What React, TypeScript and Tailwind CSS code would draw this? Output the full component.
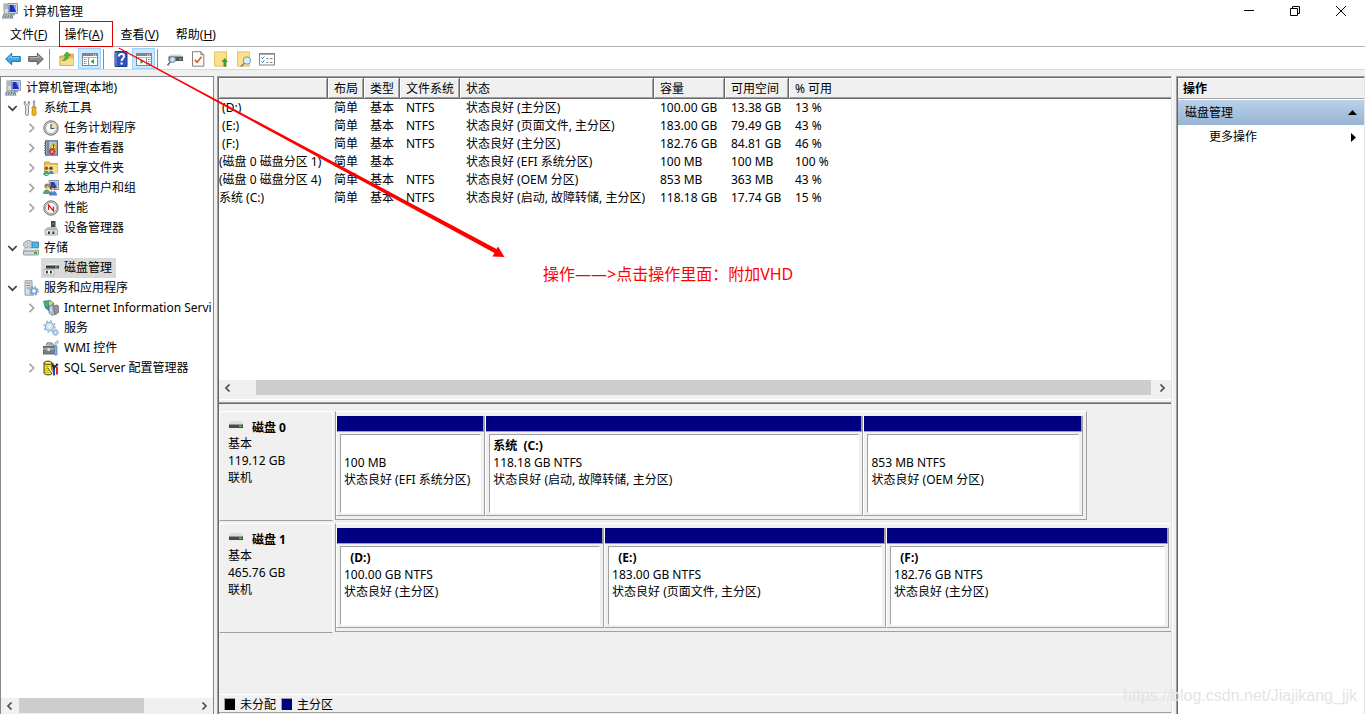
import type { ReactNode } from 'react';

/* ---------- Icons ---------- */

function Svg({ children, className = 'h-4 w-4' }: { children: ReactNode; className?: string }) {
  return (
    <svg viewBox="0 0 16 16" className={`block shrink-0 ${className}`} fill="none" aria-hidden="true">
      {children}
    </svg>
  );
}

const ComputerIcon = () => (
  <Svg>
    <rect x="2" y="1" width="5" height="10" fill="#d5d9dd" stroke="#9199a1" />
    <path d="M3 3h3M3 5h3" stroke="#8b959e" />
    <path d="M6 .5h9.500v10H7z" fill="#cfd6de" stroke="#8e99a6" />
    <path d="M7.500 2H14v7H7.500z" fill="#1d2fc0" />
    <path d="M11 2h3v7z" fill="#8da2ee" />
    <path d="M9 11h4v1.500H9z" fill="#9aa3ad" />
    <path d="M1 11.500h9l1.500 4H0z" fill="#6f7f8a" />
    <path d="M2 12.800h7M1.500 14.300h8.500" stroke="#dbe3e8" strokeDasharray="1.500 1" />
  </Svg>
);

const ToolsIcon = () => (
  <Svg>
    <path
      d="M2.200 1v2.500l1.600 1 1.700-1V1C7 2 7.300 4.500 5.500 6v8.500c0 1.300-3 1.300-3 0V6C.7 4.500.9 2 2.200 1z"
      fill="#dfe3e6"
      stroke="#7f868c"
      strokeWidth=".9"
    />
    <path d="M10.300.8h1.400v6h-1.400z" fill="#c2c7cb" stroke="#7f868c" strokeWidth=".7" />
    <path d="M9 7h4v2l-.7 1 .7 1v3.500c0 1.200-4 1.200-4 0V11l.7-1-.7-1z" fill="#f4b41e" stroke="#b97b0c" strokeWidth=".8" />
  </Svg>
);

const ClockIcon = () => (
  <Svg>
    <circle cx="8" cy="8" r="7.200" fill="#c9ccce" stroke="#6e7274" />
    <circle cx="8" cy="8" r="5.500" fill="#fbf9ee" stroke="#9a9d9f" strokeWidth=".8" />
    <path d="M8 2.500A5.500 5.500 0 0113.500 8H8z" fill="#f2dca4" />
    <path d="M8 4v4.500h3.500" stroke="#3c5a80" strokeWidth="1.200" />
  </Svg>
);

const EventIcon = () => (
  <Svg>
    <rect x="2.500" y=".8" width="12" height="14.400" fill="#9fb3c8" stroke="#4f6479" />
    <path d="M5 1v14" stroke="#4f6479" />
    <path d="M1 3h2.500M1 5.500h2.500M1 8h2.500M1 10.500h2.500M1 13h2.500" stroke="#6a7178" />
    <path d="M6.500 3h6M6.500 5h6M6.500 7h3" stroke="#dfe9f3" />
    <path d="M10.500 2.500l3.500 6H7z" fill="#ffd42e" stroke="#b88a00" strokeWidth=".6" />
    <path d="M10.500 4.500v2.200M10.500 7.200v.8" stroke="#222" strokeWidth=".9" />
    <circle cx="9.200" cy="11.600" r="2.800" fill="#d8383a" stroke="#9c1d20" strokeWidth=".6" />
    <path d="M8 10.400l2.400 2.400M10.400 10.400L8 12.800" stroke="#fff" strokeWidth=".8" />
  </Svg>
);

const SharedFolderIcon = () => (
  <Svg>
    <path d="M1.500 2h5l1 1.500h7V13h-13z" fill="#e9bf55" stroke="#c59a33" strokeWidth=".8" />
    <path d="M2.500 5h12v8h-12z" fill="#f8dc87" />
    <circle cx="3.500" cy="8.300" r="1.700" fill="#7d5a35" />
    <circle cx="8" cy="8.300" r="1.700" fill="#4f4a40" />
    <path d="M1 14c0-4.500 5-4.500 5 0z" fill="#3da878" />
    <path d="M5.700 14c0-4.500 5-4.500 5 0z" fill="#4b8ad0" />
    <path d="M0 13.500l3 2 3-1" stroke="#2fa35f" strokeWidth="1.300" />
  </Svg>
);

const UsersIcon = () => (
  <Svg>
    <path d="M6 .5h9.500v9H7z" fill="#ccd4dd" stroke="#8792a0" />
    <path d="M7.500 2H14v6H7.500z" fill="#2439c7" />
    <path d="M11 2h3v6z" fill="#94a8f0" />
    <circle cx="4" cy="6" r="2.600" fill="#a97d46" />
    <circle cx="9.500" cy="7.300" r="2.500" fill="#5b4530" />
    <path d="M3.500 6.500h2.300v2H3.500zM8.700 8h2.200v1.800H8.700z" fill="#f3cda3" />
    <path d="M0 14c0-6 7.500-6 7.500 0z" fill="#5f9b73" />
    <path d="M6 15.500c0-6.500 8-6.500 8 0z" fill="#4a83cb" />
    <path d="M9 10.500l1 2.500 1-2.500z" fill="#fff" />
  </Svg>
);

const PerformanceIcon = () => (
  <Svg>
    <circle cx="8" cy="8" r="7.200" fill="#d0d3d3" stroke="#6b6f70" />
    <circle cx="8" cy="8" r="5.500" fill="#fff" stroke="#8f9394" strokeWidth=".8" />
    <path d="M5.500 10V5l5 6V6.500" stroke="#cf2222" strokeWidth="1.300" />
  </Svg>
);

const DeviceIcon = () => (
  <Svg>
    <path d="M8 1h4.500v7H8z" fill="#45494c" />
    <path d="M9.500 3h1.500v1.500H9.500z" fill="#36c436" />
    <path d="M4.500 7h9l1 2.500h-12z" fill="#b8bdc1" />
    <path d="M2 9.500h12.500V15H2z" fill="#d9dcde" stroke="#9ca1a5" strokeWidth=".8" />
    <path d="M5 11.500h1.800V14H5zM9.500 11.500h1.800V14H9.500z" fill="#292c2e" />
  </Svg>
);

const StorageIcon = () => (
  <Svg>
    <ellipse cx="5.500" cy="4.500" rx="5" ry="4" fill="#ccd2d6" stroke="#858d93" strokeWidth=".8" />
    <circle cx="5.500" cy="4.500" r="1.300" fill="#fff" stroke="#858d93" strokeWidth=".6" />
    <path d="M9 2h6.500v5.500H9z" fill="#4db2e4" stroke="#3277a2" strokeWidth=".8" />
    <path d="M1.500 8h13l1 3h-15z" fill="#e5e8ea" stroke="#969da2" strokeWidth=".6" />
    <rect x=".5" y="11" width="15" height="4" rx=".5" fill="#d3d7da" stroke="#83898e" strokeWidth=".8" />
    <path d="M11 12h3v2h-3z" fill="#2cc02c" />
  </Svg>
);

const DiskMgmtIcon = () => (
  <Svg>
    <path d="M4 3.500h11l1 2H2.500z" fill="#eceeef" />
    <path d="M3 5.500h13v3H3z" fill="#3b3f42" />
    <path d="M12 6.300h2.500v1.400H12z" fill="#3bd13b" />
    <path d="M1 9.500h10V15H1z" fill="#f2f3f4" stroke="#a6abae" strokeWidth=".8" />
    <path d="M3 10.800h1.800v2.700H3zM7 10.800h1.800v2.700H7z" fill="#2c2f31" />
  </Svg>
);

const ServicesAppsIcon = () => (
  <Svg>
    <path d="M2 .7h7v14.500H2z" fill="#dbe0e4" stroke="#8b949b" strokeWidth=".9" />
    <path d="M3.500 3h4M3.500 5.500h4M3.500 8h4" stroke="#7c8790" />
    <circle cx="11" cy="11" r="3" fill="#bcd4ea" stroke="#6f97bb" strokeWidth="1.200" />
    <circle cx="11" cy="11" r="4.200" stroke="#6f97bb" strokeWidth="1.300" strokeDasharray="1.600 1.700" />
    <circle cx="11" cy="11" r="1.200" fill="#fff" />
  </Svg>
);

const IisIcon = () => (
  <Svg>
    <path d="M0 1l7-1 4 3v6l-4 3-5-4z" fill="#2b7fd0" />
    <path d="M1 2l4-1 2 2-2 2-1 3-3-4z" fill="#52b348" />
    <path d="M6 .8l4 1.700-1 3-3 .5z" fill="#e8d23a" />
    <path d="M6 6l4-1.500 2 1.500v8l-3 1.500L6 13z" fill="#b3bac0" stroke="#6b747b" strokeWidth=".7" />
    <path d="M10 6l3.500-1L15.500 6v6.500L12 15z" fill="#8d959b" stroke="#5f676d" strokeWidth=".7" />
    <path d="M7 8l2 1M7 10l2 1" stroke="#fff" strokeWidth=".8" />
  </Svg>
);

const GearsIcon = () => (
  <Svg>
    <circle cx="6.500" cy="6.500" r="4" fill="#e9f3fb" stroke="#8fb5d6" strokeWidth="1.500" />
    <circle cx="6.500" cy="6.500" r="5.500" stroke="#8fb5d6" strokeWidth="1.500" strokeDasharray="2 2.300" />
    <circle cx="6.500" cy="6.500" r="1.800" fill="#fff" stroke="#a9c8e2" strokeWidth=".7" />
    <circle cx="12.500" cy="12.500" r="2" fill="#d6e6f3" stroke="#7ba5c9" />
    <circle cx="12.500" cy="12.500" r="3" stroke="#7ba5c9" strokeWidth="1" strokeDasharray="1.200 1.100" />
  </Svg>
);

const WmiIcon = () => (
  <Svg>
    <path d="M4 5V3h5v2" stroke="#53595e" />
    <path d="M1.500 5.500l2-1.500H13l-1.500 2z" fill="#a6adb3" />
    <path d="M0 6.500h12V14H0z" fill="#767e84" stroke="#4f565b" strokeWidth=".8" />
    <path d="M0 9h12" stroke="#c6cbcf" />
    <path d="M4.500 8h2.500v3H4.500z" fill="#dde0e2" />
    <path d="M14.500.5l-4 4 1.500 1.500 3.500-4z" fill="#d6dadd" stroke="#7b8388" strokeWidth=".6" />
    <path d="M11.500 6h2.500v8.500c0 1-2.500 1-2.500 0z" fill="#84b5e4" stroke="#4c7cae" strokeWidth=".7" />
  </Svg>
);

const SqlIcon = () => (
  <Svg>
    <path d="M1 3c0-2.500 8-2.500 8 0v10c0 2.500-8 2.500-8 0z" fill="#f6e52c" stroke="#222" strokeWidth=".9" />
    <path d="M1 3c0 2 8 2 8 0" stroke="#222" strokeWidth=".8" />
    <path d="M3 6v8M5 6v8" stroke="#9b8c00" strokeDasharray="1 1" />
    <path d="M8.500 5l2-2.500v2l1.500 1 2-2.500 1.500 2L12 8v2h-2V8z" fill="#2b2b2b" />
    <path d="M10 9.500h2v6h-2z" fill="#2448c9" />
    <path d="M13 7h2v7.500h-2z" fill="#d92626" />
    <path d="M5.500 7l4 6" stroke="#fff" strokeWidth="1.200" />
    <path d="M4.700 7.500l4 6" stroke="#222" strokeWidth=".6" />
  </Svg>
);

const DriveIcon = () => (
  <Svg>
    <path d="M2.500 3h11L15 6.500H1z" fill="#d9dcde" />
    <path d="M1 6.500h14V10H1z" fill="#474b4e" />
    <path d="M11 7.500h2.500V9H11z" fill="#3ee03e" />
  </Svg>
);

const ArrowIcon = ({ back = false }: { back?: boolean }) => (
  <Svg>
    <path
      d={back ? 'M.7 8l6-5.800v3.400h8.600v4.800H6.700v3.400z' : 'M15.300 8l-6-5.800v3.400H.7v4.800h8.600v3.400z'}
      fill={back ? '#3ca7e2' : '#858585'}
      stroke={back ? '#1971ad' : '#5b5b5b'}
      strokeLinejoin="round"
    />
    <path d={back ? 'M3 7.500l3-2.800v2h8' : 'M2 6.700h8v-2l3 2.800'} stroke={back ? '#9adafa' : '#bcbcbc'} strokeWidth=".9" />
  </Svg>
);

const FolderUpIcon = () => (
  <Svg>
    <path d="M.8 5h5l1-2h7.700v11.500H.8z" fill="#e3ba59" stroke="#c99d3d" strokeWidth=".7" />
    <path d="M1.500 7.500h13V14h-13z" fill="#f8dc8c" />
    <path d="M3 9.500C5 9 6.500 7 6.500 4.500H4.700L8 .8l3.500 3.700H9.500C9.500 8 7 10 3 9.500z" fill="#4cb93c" stroke="#2f8a26" strokeWidth=".5" />
  </Svg>
);

const PaneIcon = ({ right = false }: { right?: boolean }) => (
  <Svg>
    <rect x=".5" y="2.500" width="15" height="12" fill="#fff" stroke="#7f868c" />
    <path d="M1 4h14" stroke="#7f868c" strokeWidth="2" />
    <path d="M11 4h3" stroke="#fff" strokeDasharray="1 1" />
    <path d="M1 6.500h14" stroke="#aeb4b9" />
    <path d={right ? 'M10.500 7v7.500' : 'M6.500 7v7.500'} stroke="#8f969b" />
    <path d={right ? 'M12 8.500h2.500M12 10.500h2.500M12 12.500h2.500' : 'M2 8.500h3M2 10.500h3M2 12.500h3'} stroke="#4f80b8" strokeDasharray="1 .5" />
    <path d={right ? 'M4.500 8v5L8 10.500z' : 'M12 8v5l-3.500-2.500z'} fill="#3c9f35" />
  </Svg>
);

const HelpIcon = () => (
  <Svg>
    <path d="M2 .5h12v15H2z" fill="#2e55bf" stroke="#1c388b" />
    <path d="M3 1v14" stroke="#8aa4e6" />
    <path d="M5.800 5.500C5.800 2 11 2.200 11 5.300c0 2.200-2.400 2.200-2.400 4.700" stroke="#fff" strokeWidth="1.900" />
    <circle cx="8.600" cy="12.500" r="1.200" fill="#fff" />
  </Svg>
);

const ScanDriveIcon = () => (
  <Svg>
    <path d="M3.500 3.500h11l1.500 2H1.500z" fill="#d5d9dc" />
    <path d="M1.500 5.500H16v4.500H1.500z" fill="#4e5458" />
    <path d="M12 7.300h2.800v1.500H12z" fill="#32d432" />
    <circle cx="5.500" cy="8.500" r="3" fill="#bfe0f6" stroke="#71808b" />
    <path d="M3.300 10.800L.5 14.500" stroke="#66727b" strokeWidth="1.800" />
  </Svg>
);

const CheckDocIcon = () => (
  <Svg>
    <path d="M2.500.7h8.300l3 3v11.500H2.500z" fill="#fff" stroke="#818181" />
    <path d="M10.800.7v3h3" stroke="#818181" />
    <path d="M4.700 8.800l2.400 2.500 4.500-5.500" stroke="#e05a1f" strokeWidth="1.700" />
  </Svg>
);

const NoteUpIcon = () => (
  <Svg>
    <path d="M1.500.8h12v14.400h-12z" fill="#fbe08c" stroke="#dfb955" strokeWidth=".8" />
    <path d="M10.500 15.800V11h-2l3.200-4 3.300 4h-2v4.800z" fill="#23a63d" />
  </Svg>
);

const NoteSearchIcon = () => (
  <Svg>
    <path d="M1.500.8h12v14.400h-12z" fill="#fbe08c" stroke="#dfb955" strokeWidth=".8" />
    <circle cx="11" cy="9.500" r="3.700" fill="#d8edfa" stroke="#8296a5" />
    <path d="M8.300 12.300L5 15.500" stroke="#6f7f8b" strokeWidth="1.600" />
  </Svg>
);

const ChecklistIcon = () => (
  <Svg>
    <rect x=".5" y="2.500" width="15" height="11.500" fill="#fff" stroke="#7d8388" />
    <path d="M1 3.500h14" stroke="#a9aeb3" />
    <path d="M2.500 6.500l1 1 2-2M2.500 10.500l1 1 2-2" stroke="#2d7fc4" />
    <path d="M7.500 7.500h2M11 7.500h2.500M7.500 11.500h2M11 11.500h2.500" stroke="#7d8388" />
  </Svg>
);

const Chevron = ({ open }: { open: boolean }) => (
  <Svg>
    <path
      d={open ? 'M3.300 6L7.500 10.200 11.700 6' : 'M4.500 3.800L8.700 8 4.500 12.200'}
      stroke={open ? '#404040' : '#a6a6a6'}
      strokeWidth="1.700"
    />
  </Svg>
);

/* ---------- Data ---------- */

type TreeItem = { label: string; level: 0 | 1 | 2; icon: ReactNode; open?: boolean; selected?: boolean };

const tree: TreeItem[] = [
  { label: '计算机管理(本地)', level: 0, icon: <ComputerIcon /> },
  { label: '系统工具', level: 1, icon: <ToolsIcon />, open: true },
  { label: '任务计划程序', level: 2, icon: <ClockIcon />, open: false },
  { label: '事件查看器', level: 2, icon: <EventIcon />, open: false },
  { label: '共享文件夹', level: 2, icon: <SharedFolderIcon />, open: false },
  { label: '本地用户和组', level: 2, icon: <UsersIcon />, open: false },
  { label: '性能', level: 2, icon: <PerformanceIcon />, open: false },
  { label: '设备管理器', level: 2, icon: <DeviceIcon /> },
  { label: '存储', level: 1, icon: <StorageIcon />, open: true },
  { label: '磁盘管理', level: 2, icon: <DiskMgmtIcon />, selected: true },
  { label: '服务和应用程序', level: 1, icon: <ServicesAppsIcon />, open: true },
  { label: 'Internet Information Servi', level: 2, icon: <IisIcon />, open: false },
  { label: '服务', level: 2, icon: <GearsIcon /> },
  { label: 'WMI 控件', level: 2, icon: <WmiIcon /> },
  { label: 'SQL Server 配置管理器', level: 2, icon: <SqlIcon />, open: false },
];

const indents = ['pl-0.5', 'pl-1', 'pl-6'];

const menus = [
  { name: '文件', hotkey: 'F' },
  { name: '操作', hotkey: 'A' },
  { name: '查看', hotkey: 'V' },
  { name: '帮助', hotkey: 'H' },
];

const columns = [
  { title: '', width: 'w-[109px]' },
  { title: '布局', width: 'w-9' },
  { title: '类型', width: 'w-9' },
  { title: '文件系统', width: 'w-15' },
  { title: '状态', width: 'w-[194px]' },
  { title: '容量', width: 'w-[71px]' },
  { title: '可用空间', width: 'w-16' },
  { title: '% 可用', width: '' },
];

const volumes = [
  [' (D:)', '简单', '基本', 'NTFS', '状态良好 (主分区)', '100.00 GB', '13.38 GB', '13 %'],
  [' (E:)', '简单', '基本', 'NTFS', '状态良好 (页面文件, 主分区)', '183.00 GB', '79.49 GB', '43 %'],
  [' (F:)', '简单', '基本', 'NTFS', '状态良好 (主分区)', '182.76 GB', '84.81 GB', '46 %'],
  ['(磁盘 0 磁盘分区 1)', '简单', '基本', '', '状态良好 (EFI 系统分区)', '100 MB', '100 MB', '100 %'],
  ['(磁盘 0 磁盘分区 4)', '简单', '基本', 'NTFS', '状态良好 (OEM 分区)', '853 MB', '363 MB', '43 %'],
  ['系统 (C:)', '简单', '基本', 'NTFS', '状态良好 (启动, 故障转储, 主分区)', '118.18 GB', '17.74 GB', '15 %'],
];

const disks = [
  {
    name: '磁盘 0',
    size: '119.12 GB',
    frame: 'w-[90%] border-r pr-[3px]',
    partitions: [
      { name: '', size: '100 MB', status: '状态良好 (EFI 系统分区)', weight: 148 },
      { name: '系统  (C:)', size: '118.18 GB NTFS', status: '状态良好 (启动, 故障转储, 主分区)', weight: 378 },
      { name: '', size: '853 MB NTFS', status: '状态良好 (OEM 分区)', weight: 219 },
    ],
  },
  {
    name: '磁盘 1',
    size: '465.76 GB',
    frame: 'w-full pr-0.5',
    partitions: [
      { name: '  (D:)', size: '100.00 GB NTFS', status: '状态良好 (主分区)', weight: 268 },
      { name: '  (E:)', size: '183.00 GB NTFS', status: '状态良好 (页面文件, 主分区)', weight: 282 },
      { name: '  (F:)', size: '182.76 GB NTFS', status: '状态良好 (主分区)', weight: 283 },
    ],
  },
];

/* ---------- Parts ---------- */

function TitleBar() {
  return (
    <header className="flex h-[22px] shrink-0 items-center bg-white pr-px">
      <div className="flex flex-1 items-center gap-[5px] pl-0.5">
        <ComputerIcon />
        <h1 className="pt-0.5">计算机管理</h1>
      </div>
      <button type="button" aria-label="最小化" className="flex h-full w-[46px] items-center justify-center">
        <svg width="10" height="10" className="block">
          <path d="M0 4.500h10" stroke="#000" />
        </svg>
      </button>
      <button type="button" aria-label="还原" className="flex h-full w-[46px] items-center justify-center">
        <svg width="10" height="10" fill="none" className="block">
          <path d="M.5 2.500h7v7h-7zM2.500 2.500v-2h7v7h-2" stroke="#000" />
        </svg>
      </button>
      <button type="button" aria-label="关闭" className="flex h-full w-[46px] items-center justify-center">
        <svg width="10" height="10" className="block">
          <path d="M0 0l10 10M10 0L0 10" stroke="#000" />
        </svg>
      </button>
    </header>
  );
}

function MenuBar() {
  return (
    <nav className="flex h-6 shrink-0 gap-[5px] bg-white pl-1">
      {menus.map((m) => (
        <button key={m.name} type="button" className="relative px-1.5 pt-0.5">
          {m.name}(<u className="underline-offset-1">{m.hotkey}</u>)
          {m.hotkey === 'A' && <span className="absolute -top-px -right-1 -bottom-px left-px border border-[#e00000]" />}
        </button>
      ))}
    </nav>
  );
}

function ToolButton({ label, active = false, children }: { label: string; active?: boolean; children: ReactNode }) {
  return (
    <button
      type="button"
      aria-label={label}
      className={`flex h-[21px] w-[23px] items-center justify-center ${active ? 'border border-[#99d1ff] bg-[#cce8ff]' : ''}`}
    >
      {children}
    </button>
  );
}

const Separator = () => <span className="mr-[5px] ml-0.5 h-5 w-px bg-[#8d8d8d]" />;

function Toolbar() {
  return (
    <div className="flex h-6 shrink-0 items-end border-y border-t-[#b4b4b4] border-b-[#d9d9d9] bg-white pl-px">
      <ToolButton label="后退"><ArrowIcon back /></ToolButton>
      <ToolButton label="前进"><ArrowIcon /></ToolButton>
      <Separator />
      <ToolButton label="向上"><FolderUpIcon /></ToolButton>
      <ToolButton label="显示/隐藏控制台树" active><PaneIcon /></ToolButton>
      <Separator />
      <ToolButton label="帮助"><HelpIcon /></ToolButton>
      <ToolButton label="显示/隐藏操作窗格" active><PaneIcon right /></ToolButton>
      <Separator />
      <ToolButton label="重新扫描"><ScanDriveIcon /></ToolButton>
      <ToolButton label="属性"><CheckDocIcon /></ToolButton>
      <ToolButton label="附加"><NoteUpIcon /></ToolButton>
      <ToolButton label="查找"><NoteSearchIcon /></ToolButton>
      <ToolButton label="设置"><ChecklistIcon /></ToolButton>
    </div>
  );
}

function ScrollBar({ children }: { children: ReactNode }) {
  return (
    <div className="flex h-[15px] shrink-0 items-stretch bg-[#f0f0f0]">
      <button type="button" aria-label="向左滚动" className="flex w-[17px] items-center justify-center">
        <svg width="7" height="8" fill="none" className="block">
          <path d="M5.500.5L2 4l3.500 3.500" stroke="#505050" strokeWidth="1.700" />
        </svg>
      </button>
      <div className="flex flex-1">{children}</div>
      <button type="button" aria-label="向右滚动" className="flex w-[17px] items-center justify-center">
        <svg width="7" height="8" fill="none" className="block">
          <path d="M1.500.5L5 4 1.500 7.500" stroke="#505050" strokeWidth="1.700" />
        </svg>
      </button>
    </div>
  );
}

function TreePane() {
  return (
    <aside className="flex w-[214px] shrink-0 flex-col border border-b-0 border-[#828790] bg-white">
      <ul className="min-h-0 flex-1 overflow-hidden pt-px">
        {tree.map((item) => (
          <li key={item.label} className={`flex h-5 items-center ${indents[item.level]}`}>
            {item.level > 0 && (
              <span className="w-4 shrink-0">{item.open !== undefined && <Chevron open={item.open} />}</span>
            )}
            <button
              type="button"
              className={`flex h-5 items-center gap-[5px] pr-1 pl-0.5 ${item.selected ? 'bg-[#d9d9d9]' : ''}`}
            >
              {item.icon}
              {item.label}
            </button>
          </li>
        ))}
      </ul>
      <ScrollBar>
        <span className="ml-px w-[70%] bg-[#cdcdcd]" />
      </ScrollBar>
      <div className="h-px shrink-0 bg-[#f0f0f0]" />
    </aside>
  );
}

function VolumeTable() {
  return (
    <table className="w-full table-fixed border-separate border-spacing-0">
      <thead>
        <tr>
          {columns.map((c, i) => (
            <th
              key={i}
              className={`h-[21px] border-b border-[#696969] bg-[#f0f0f0] p-0 pl-1.5 text-left font-normal ${c.width} ${
                i < columns.length - 1
                  ? 'border-r shadow-[inset_1px_1px_0_#fff,inset_-1px_-1px_0_#a0a0a0]'
                  : 'shadow-[inset_1px_1px_0_#fff,inset_0_-1px_0_#a0a0a0]'
              }`}
            >
              {c.title}
            </th>
          ))}
        </tr>
      </thead>
      <tbody>
        {volumes.map((row) => (
          <tr key={row[0]}>
            {row.map((cell, i) => (
              <td key={i} className={`h-[18px] p-0 align-top whitespace-pre ${i > 0 ? 'pl-1.5' : ''}`}>
                {cell}
              </td>
            ))}
          </tr>
        ))}
      </tbody>
    </table>
  );
}

function VolumeList() {
  return (
    <section className="relative flex h-[326px] shrink-0 flex-col border-b border-[#696969] bg-[#f0f0f0]">
      <div className="flex-1 bg-white">
        <VolumeTable />
      </div>
      <ScrollBar>
        <span className="mr-[3px] ml-5 flex-1 bg-[#cdcdcd]" />
      </ScrollBar>
      <div className="mt-1 h-1 border-y border-t-white border-b-[#a0a0a0]" />
      <p className="absolute top-[186px] left-[324px] text-base leading-5 text-[#f00]">
        操作——&gt;点击操作里面：附加VHD
      </p>
    </section>
  );
}

function DiskRow({ disk }: { disk: (typeof disks)[number] }) {
  return (
    <section className="mb-0.5 flex h-[110px]">
      <div className="w-[114px] shrink-0 border border-t-white border-r-white border-b-[#a0a0a0] border-l-white pt-1.5 pl-2">
        <h2 className="flex h-[17px] items-start gap-2 font-bold">
          <DriveIcon />
          <span className="pt-px">{disk.name}</span>
        </h2>
        <p>基本</p>
        <p>{disk.size}</p>
        <p>联机</p>
      </div>
      <div className="flex min-w-0 flex-1 pb-px pl-0.5">
        <div
          className={`flex border-t border-b border-l border-t-white border-r-[#a0a0a0] border-b-[#a0a0a0] border-l-[#a0a0a0] pt-1 pb-[3px] ${disk.frame}`}
        >
          {disk.partitions.map((p) => (
            <div
              key={p.status + p.size}
              className="flex min-w-0 basis-0 flex-col border-r border-b border-l border-r-[#a0a0a0] border-b-[#a0a0a0] border-l-white"
              style={{ flexGrow: p.weight }}
            >
              <div className="h-4 shrink-0 border-r border-b border-[#a0a0a0] bg-[#000080]" />
              <div className="mx-[3px] my-0.5 flex-1 border border-t-[#a0a0a0] border-r-white border-b-white border-l-[#a0a0a0] bg-white pt-0.5 pl-[3px] whitespace-pre">
                <h3 className="h-[17px] font-bold">{p.name}</h3>
                <p>{p.size}</p>
                <p>{p.status}</p>
              </div>
            </div>
          ))}
        </div>
      </div>
    </section>
  );
}

function Legend() {
  return (
    <div className="flex h-[19px] shrink-0 items-center gap-[5px] border-y border-t-white border-b-[#a0a0a0] pl-[5px]">
      <span className="h-3 w-[11px] border-t border-l border-[#a0a0a0] bg-black" />
      <span className="pt-px">未分配</span>
      <span className="h-3 w-[11px] border-t border-l border-[#a0a0a0] bg-[#000080]" />
      <span className="pt-px">主分区</span>
    </div>
  );
}

function MainPane() {
  return (
    <main className="flex min-w-0 flex-1 flex-col border-t border-r border-l border-t-[#a0a0a0] border-r-[#e3e3e3] border-l-[#a0a0a0]">
      <div className="flex min-h-0 flex-1 flex-col border-t border-l border-[#696969] pb-px leading-[17px]">
        <VolumeList />
        <div className="min-h-0 flex-1 overflow-hidden pt-[7px]">
          {disks.map((d) => (
            <DiskRow key={d.name} disk={d} />
          ))}
        </div>
        <Legend />
      </div>
    </main>
  );
}

function ActionsPane() {
  return (
    <aside className="flex w-[189px] shrink-0 border-t border-r border-l border-t-[#a0a0a0] border-r-[#e3e3e3] border-l-[#a0a0a0]">
      <div className="flex-1 border-t border-l border-[#696969] bg-white">
        <h2 className="flex h-[21px] items-center border-t border-b border-t-white border-b-[#a0a0a0] bg-[#f0f0f0] pl-[5px] font-bold">
          操作
        </h2>
        <button
          type="button"
          className="mt-px flex h-[25px] w-full items-center justify-between bg-linear-to-b from-[#b9d1ea] to-[#98b4d2] pr-[7px] pl-[7px]"
        >
          磁盘管理
          <svg width="9" height="5" className="block">
            <path d="M0 5L4.500 0 9 5z" fill="#000" />
          </svg>
        </button>
        <button type="button" className="flex h-6 w-full items-center justify-between pr-2 pl-[31px]">
          更多操作
          <svg width="5" height="9" className="block">
            <path d="M0 0l5 4.500L0 9z" fill="#000" />
          </svg>
        </button>
      </div>
    </aside>
  );
}

export default function App() {
  return (
    <div className="relative flex h-screen flex-col overflow-hidden bg-[#f0f0f0] font-['Noto_Sans','Noto_Sans_CJK_SC',sans-serif] text-xs whitespace-nowrap text-black">
      <TitleBar />
      <MenuBar />
      <Toolbar />
      <div className="flex min-h-0 flex-1 pt-1.5">
        <TreePane />
        <div className="w-[3px] shrink-0" />
        <MainPane />
        <div className="w-1 shrink-0 border-l border-white" />
        <ActionsPane />
      </div>

      {/* Red pointer from the menu into the volume list */}
      <svg className="pointer-events-none absolute top-0 left-0" width="520" height="270" aria-hidden="true">
        <path d="M118.500 48.500l.5-1L496.500 249l1.500-2.500 6.500 10.500-12-.5 2-3.500z" fill="#f00" />
      </svg>
      <span className="pointer-events-none absolute right-2 bottom-2 font-['Liberation_Sans',sans-serif] text-base leading-5 text-[#e4e4e4]">
        https://blog.csdn.net/Jiajikang_jjk
      </span>
    </div>
  );
}
